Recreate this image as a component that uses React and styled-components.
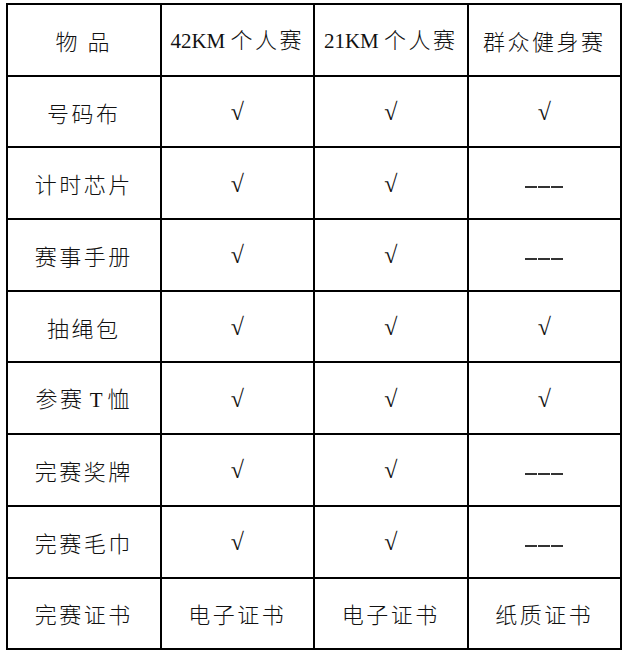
import React from 'react';
import styled, { createGlobalStyle } from 'styled-components';

const GlobalStyle = createGlobalStyle`
  html, body {
    margin: 0;
    padding: 0;
    background: #fff;
  }
  body {
    font-family: "Liberation Serif", "Noto Sans CJK SC", serif;
    color: #111;
  }
`;

const Page = styled.main`
  padding: 3px 8px 0 6px;
`;

const Table = styled.table`
  width: 616px;
  border-collapse: collapse;
  table-layout: fixed;
  border: 2px solid #000;
`;

const Row = styled.tr`
  height: 71.7px;
`;

const Cell = styled.td`
  border: 2px solid #000;
  padding: 0;
  text-align: center;
  vertical-align: middle;
  font-family: "Noto Sans CJK SC", "Liberation Serif", sans-serif;
  font-weight: 300;
  font-size: 22px;
  letter-spacing: 2.5px;
  line-height: 1;
  color: #111;
`;

const Latin = styled.span`
  font-family: "Liberation Serif", serif;
  font-weight: 400;
  font-size: 21px;
  letter-spacing: 0;
`;

const Check = styled.span`
  font-family: "Liberation Serif", serif;
  font-weight: 700;
  font-size: 24px;
  letter-spacing: 0;
`;

const Dash = styled.span`
  display: inline-flex;
  gap: 1px;
  vertical-align: middle;
`;

const DashBar = styled.i`
  display: block;
  width: 12px;
  height: 2px;
  background: #333;
`;

const columns = [
  { key: 'full', label: ['42KM', '个人赛'] },
  { key: 'half', label: ['21KM', '个人赛'] },
  { key: 'fun', label: [null, '群众健身赛'] },
];

const items = [
  { name: '号码布', values: ['y', 'y', 'y'] },
  { name: '计时芯片', values: ['y', 'y', '-'] },
  { name: '赛事手册', values: ['y', 'y', '-'] },
  { name: '抽绳包', values: ['y', 'y', 'y'] },
  { name: '参赛T恤', values: ['y', 'y', 'y'] },
  { name: '完赛奖牌', values: ['y', 'y', '-'] },
  { name: '完赛毛巾', values: ['y', 'y', '-'] },
  { name: '完赛证书', values: ['电子证书', '电子证书', '纸质证书'] },
];

const renderName = (name) => {
  if (name === '参赛T恤') {
    return (
      <>
        参赛<Latin> T </Latin>恤
      </>
    );
  }
  return name;
};

const renderValue = (value) => {
  if (value === 'y') return <Check>√</Check>;
  if (value === '-') {
    return (
      <Dash aria-label="———">
        <DashBar />
        <DashBar />
        <DashBar />
      </Dash>
    );
  }
  return value;
};

const App = () => (
  <Page>
    <GlobalStyle />
    <Table>
      <tbody>
        <Row>
          <Cell>物 品</Cell>
          {columns.map(col => (
            <Cell key={col.key}>
              {col.label[0] && <Latin>{col.label[0]} </Latin>}
              {col.label[1]}
            </Cell>
          ))}
        </Row>
        {items.map(item => (
          <Row key={item.name}>
            <Cell>{renderName(item.name)}</Cell>
            {item.values.map((v, i) => (
              <Cell key={i}>{renderValue(v)}</Cell>
            ))}
          </Row>
        ))}
      </tbody>
    </Table>
  </Page>
);

export default App;
